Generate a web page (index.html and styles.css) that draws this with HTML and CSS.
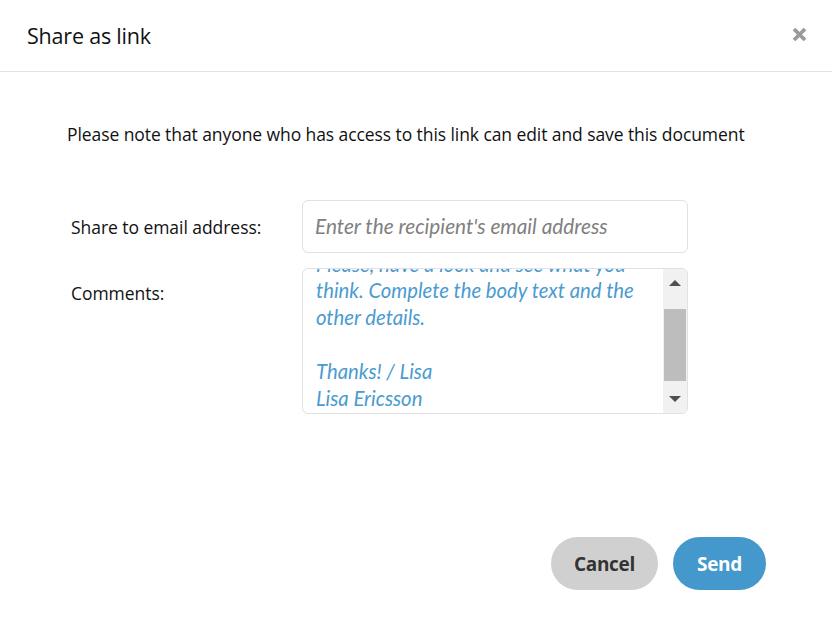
FILE: index.html
```html
<!DOCTYPE html>
<html>
<head>
<meta charset="utf-8">
<link rel="stylesheet" href="styles.css">
</head>
<body>
<div class="dialog">
  <div class="header">
    <div class="title">Share as link</div>
    <svg class="close" width="15" height="15" viewBox="0 0 15 15"><path d="M2 2 L13 13 M13 2 L2 13" stroke="#9a9a9a" stroke-width="3.8" stroke-linecap="butt"/></svg>
  </div>
  <div class="body">
    <p class="note">Please note that anyone who has access to this link can edit and save this document</p>
    <div class="form">
      <div class="label">Share to email address:</div>
      <div class="input"><span class="placeholder">Enter the recipient's email address</span></div>
      <div class="label label-comments">Comments:</div>
      <div class="textarea">
        <div class="ta-view">
          <div class="ta-text">Please, have a look and see what you think. Complete the body text and the other details.<br><br>Thanks! / Lisa<br>Lisa Ericsson</div>
        </div>
        <div class="scrollbar">
          <div class="sb-btn"><span class="arrow-up"></span></div>
          <div class="sb-track"><div class="sb-thumb"></div></div>
          <div class="sb-btn"><span class="arrow-down"></span></div>
        </div>
      </div>
    </div>
  </div>
  <div class="footer">
    <button class="btn btn-cancel">Cancel</button>
    <button class="btn btn-send">Send</button>
  </div>
</div>
</body>
</html>
```
FILE: styles.css
```css
* { box-sizing: border-box; }
html, body { margin: 0; padding: 0; background: #fff; }
body { font-family: "Open Sans", sans-serif; color: #111; width: 832px; height: 620px; overflow: hidden; }
.dialog { width: 832px; height: 620px; display: flex; flex-direction: column; }
.header { height: 72px; border-bottom: 1px solid #e3e3e3; display: flex; align-items: center; justify-content: space-between; padding: 0 25px 0 27px; }
.title { font-family: "Open Sans", sans-serif; font-size: 21.5px; letter-spacing: -0.2px; color: #111; }
.close { margin-top: -2px; }
.body { padding: 50px 0 0 67px; flex: 1; }
.note { margin: 0; font-family: "Open Sans", sans-serif; font-size: 17.5px; letter-spacing: -0.08px; line-height: 24px; color: #111; }
.form { display: grid; grid-template-columns: 231px 386px; row-gap: 15px; margin-top: 54px; margin-left: 4px; }
.label { font-family: "Open Sans", sans-serif; font-size: 17.5px; letter-spacing: -0.05px; color: #111; align-self: center; }
.label-comments { align-self: start; padding-top: 13px; }
.input { height: 53px; border: 1px solid #e0e0e6; border-radius: 6px; display: flex; align-items: center; padding-left: 12px; }
.placeholder { font-family: "Lato", sans-serif; font-style: italic; font-size: 20.8px; color: #808080; margin-top: -2px; }
.textarea { height: 146px; border: 1px solid #e0e0e6; border-radius: 6px; display: flex; overflow: hidden; }
.ta-view { flex: 1; overflow: hidden; padding: 0 10px 0 13px; }
.ta-text { font-family: "Lato", sans-serif; font-style: italic; font-size: 20.3px; line-height: 26.8px; color: #4a9bd0; margin-top: -18.4px; }
.scrollbar { width: 24px; background: #f1f1f1; display: flex; flex-direction: column; }
.sb-btn { height: 28px; display: flex; align-items: center; justify-content: center; }
.sb-track { flex: 1; padding: 12px 1px 2px 1px; }
.sb-thumb { height: 72px; background: #bdbdbd; }
.arrow-up { width: 0; height: 0; border-left: 6px solid transparent; border-right: 6px solid transparent; border-bottom: 6px solid #505050; }
.arrow-down { width: 0; height: 0; border-left: 6px solid transparent; border-right: 6px solid transparent; border-top: 6px solid #505050; }
.footer { display: flex; justify-content: flex-end; gap: 15px; padding: 0 66px 30px 0; }
.btn { height: 53px; border: none; border-radius: 27px; font-family: "Open Sans", sans-serif; font-weight: 700; font-size: 19px; letter-spacing: -0.3px; }
.btn-cancel { width: 107px; background: #d0d0d0; color: #333; }
.btn-send { width: 93px; background: #4598cb; color: #fff; }
```
